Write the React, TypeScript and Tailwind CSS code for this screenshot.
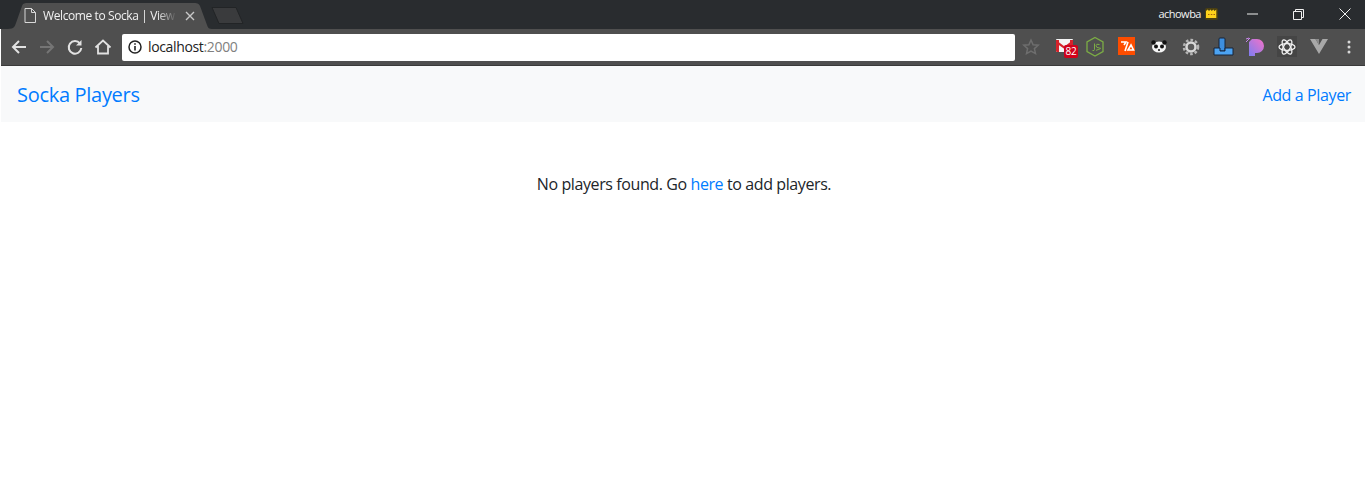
import React from "react";

const ui = { fontFamily: '"Open Sans", "Noto Sans", sans-serif' };

function Ext({ children, w = 24 }: { children: React.ReactNode; w?: number }) {
  return <svg width={w} height="22" viewBox="0 0 24 22" className="shrink-0">{children}</svg>;
}

export default function App() {
  return (
    <div className="w-[1365px] h-[492px] bg-white overflow-hidden flex flex-col font-['Segoe_UI','Open_Sans',sans-serif]">
      {/* title bar */}
      <div className="h-[29px] bg-[#292c2f] flex items-end pl-[8px] relative shrink-0">
        <div className="relative w-[204px] h-[27px] shrink-0">
          <svg width="204" height="27" viewBox="0 0 204 27" className="absolute inset-0">
            <path d="M0 27 C6 27 7 24 8 21 L14 4 C15 1 17 1 20 1 L186 1 C190 1 191 2 192 4 L199 23 C200 26 201 27 204 27 Z" fill="#4f4f4f" />
          </svg>
          <div className="relative flex items-center h-full pl-[16px]">
            <svg width="12" height="15" viewBox="0 0 12 15" className="shrink-0">
              <path d="M1 .5h6.500l4 4v10H1z M7.500 .5v4h4" fill="none" stroke="#d8d8d8" strokeWidth="1" />
            </svg>
            <span className="ml-[7px] w-[134px] whitespace-nowrap text-[12px] text-[#f1f1f1] tracking-[-0.4px]" style={{ ...ui, maskImage: "linear-gradient(to right, black 85%, transparent)" }}>Welcome to Socka | View</span>
            <svg width="10" height="10" viewBox="0 0 10 10" className="ml-[8px] shrink-0">
              <path d="M1 1l8 8M9 1l-8 8" stroke="#c8c8c8" strokeWidth="1.400" />
            </svg>
          </div>
        </div>
        <svg width="34" height="17" viewBox="0 0 34 17" className="mb-[5px] ml-[-1px] shrink-0">
          <path d="M1 .5h24l7 16H8z" fill="#3a3b3d" stroke="#222426" />
        </svg>
        <div className="ml-auto flex items-center h-full self-start pb-[1px] text-[#f4f4f4]">
          <span className="text-[11px] tracking-[-0.5px] mr-[4px]" style={ui}>achowba</span>
          <svg width="13" height="12" viewBox="0 0 13 12" className="mr-[29px]">
            <rect x="0" y="0" width="13" height="12" rx="2" fill="#4a3f12" />
            <path d="M1 3l1.700-1.500 1.300 1.500 1.500-1.500 1.300 1.500 1.500-1.500 1.300 1.500 1.700-1.500V10H1z" fill="#ffd21a" />
            <path d="M3 6.500h1.500M5.800 6.500h1.500M8.500 6.500H10" stroke="#a8620f" />
          </svg>
          <svg width="11" height="2" viewBox="0 0 11 2" className="mr-[35px]"><path d="M0 1h11" stroke="#f0f0f0" /></svg>
          <svg width="11" height="11" viewBox="0 0 11 11" className="mr-[35px]">
            <path d="M.5 2.500h8v8h-8zM2.500 2.500v-2h8v8h-2" fill="none" stroke="#f0f0f0" />
          </svg>
          <svg width="12" height="12" viewBox="0 0 12 12" className="mr-[14px]"><path d="M.5 .5l11 11M11.500 .5l-11 11" stroke="#f0f0f0" /></svg>
        </div>
      </div>

      {/* toolbar */}
      <div className="h-[37px] ml-[1px] bg-[#4f4f4f] border-b border-[#3a3a3a] flex items-center shrink-0">
        <svg width="18" height="18" viewBox="0 0 18 18" className="ml-[9px]"><path d="M16 9H3M9 3L3 9l6 6" fill="none" stroke="#e2e2e2" strokeWidth="2" /></svg>
        <svg width="18" height="18" viewBox="0 0 18 18" className="ml-[10px]"><path d="M2 9h13M9 3l6 6-6 6" fill="none" stroke="#757575" strokeWidth="2" /></svg>
        <svg width="18" height="18" viewBox="0 0 18 18" className="ml-[10px]"><path d="M14 5.500A6.300 6.300 0 1 0 15.300 10" fill="none" stroke="#e2e2e2" strokeWidth="2" /><path d="M15.500 2v5.500H10z" fill="#e2e2e2" /></svg>
        <svg width="18" height="18" viewBox="0 0 18 18" className="ml-[10px]"><path d="M1.500 9.500L9 2.500l7.500 7M4 8v7.500h10V8" fill="none" stroke="#e2e2e2" strokeWidth="1.800" /></svg>
        <div className="ml-[10px] w-[893px] h-[27px] bg-white rounded-[2px] flex items-center pl-[6px] pb-[1px] text-[14px] tracking-[-0.35px]" style={ui}>
          <svg width="14" height="14" viewBox="0 0 14 14" className="shrink-0 mt-[1px]">
            <circle cx="7" cy="7" r="6" fill="none" stroke="#222" strokeWidth="1.500" />
            <path d="M7 6v4.500M7 3.300v1.500" stroke="#222" strokeWidth="1.600" />
          </svg>
          <span className="ml-[6px] text-[#222]">localhost<span className="text-[#808080]">:2000</span></span>
        </div>
        <svg width="18" height="18" viewBox="0 0 18 18" className="ml-[7px] shrink-0"><path d="M9 2l2.100 4.700 5.100.5-3.800 3.400 1.100 5L9 13l-4.500 2.600 1.100-5L1.800 7.200l5.100-.5z" fill="none" stroke="#6e6e6e" strokeWidth="1.500" /></svg>
        <div className="ml-[16px] w-[24px] h-[22px] relative shrink-0">
          <svg width="18" height="13" viewBox="0 0 18 13" className="absolute left-0 top-[3px]">
            <rect width="17" height="13" rx="1" fill="#f4f4f4" />
            <path d="M0 1h3v12H1a1 1 0 0 1-1-1zM14 1h3v11a1 1 0 0 1-1 1h-2zM0 1l8.500 6.500L17 1v3L8.500 10 0 4z" fill="#d5232b" />
          </svg>
          <span className="absolute left-[8px] top-[9px] w-[14px] h-[13px] rounded-[2px] bg-[#d0021b] text-white text-[10px] leading-[13px] text-center tracking-[-0.3px]" style={ui}>82</span>
        </div>
        <div className="ml-[3px] flex items-center gap-[8px]">
          <Ext><path d="M12 1.500l8 4.500v9.500l-8 4.500-8-4.500V6z" fill="none" stroke="#7cad45" strokeWidth="1.300" /><path d="M11.500 7.500v6q0 1.500-2 1M16.500 8.500q-3.500-1-3.500 1.200t3.500 2.300-3.500 2.300" fill="none" stroke="#7cad45" /></Ext>
          <Ext><rect x="3" y="1" width="17" height="18" fill="#fd4d00" /><path d="M6 6h5l-2 3M13 6l-3 9M13 14l3-5 2.500 5z" fill="none" stroke="#fff" strokeWidth="1.600" /></Ext>
          <Ext><ellipse cx="12" cy="11" rx="7" ry="5.500" fill="#f4f4f4" /><circle cx="6.500" cy="6.500" r="2.200" fill="#111" /><circle cx="17.500" cy="6.500" r="2.200" fill="#111" /><circle cx="9" cy="10.500" r="2" fill="#111" /><circle cx="15" cy="10.500" r="2" fill="#111" /><path d="M11 14h2" stroke="#111" strokeWidth="1.500" /></Ext>
          <Ext><circle cx="12" cy="11" r="4.500" fill="#5a5a5a" stroke="#d8d8d8" strokeWidth="2.500" /><circle cx="12" cy="11" r="7" fill="none" stroke="#b5b5b5" strokeWidth="2.600" strokeDasharray="2.600 2" /></Ext>
          <Ext><rect x="8" y="2" width="6" height="13" rx="1" fill="#3d8fe0" stroke="#16253a" /><path d="M3 12h6v3h5v-3h8v7H3z" fill="#4ca3f2" stroke="#16253a" /></Ext>
          <Ext><defs><linearGradient id="p" x1="0" y1="1" x2="1" y2="0"><stop offset="0" stopColor="#7d7df0" /><stop offset="1" stopColor="#f472c8" /></linearGradient></defs><path d="M6 6l3-3h5a7 7 0 0 1 0 14h-2v3H6z" fill="url(#p)" /><path d="M3 3l3-1M3 6l4-4" stroke="#c886e8" /></Ext>
          <Ext><rect x="2" y="0" width="20" height="21" fill="#454545" /><g fill="none" stroke="#f1f1f1" strokeWidth="1.300"><ellipse cx="12" cy="11" rx="8" ry="3.300" /><ellipse cx="12" cy="11" rx="8" ry="3.300" transform="rotate(60 12 11)" /><ellipse cx="12" cy="11" rx="8" ry="3.300" transform="rotate(120 12 11)" /></g></Ext>
          <Ext><path d="M3 3h5.500l3.500 6 3.500-6H21l-9 15z" fill="#a8a8a8" /><path d="M8.500 3H12v6z" fill="#8c8c8c" /></Ext>
        </div>
        <svg width="4" height="14" viewBox="0 0 4 14" className="ml-[16px] shrink-0"><circle cx="2" cy="2" r="1.500" fill="#d8d8d8" /><circle cx="2" cy="7" r="1.500" fill="#d8d8d8" /><circle cx="2" cy="12" r="1.500" fill="#d8d8d8" /></svg>
      </div>

      {/* navbar */}
      <nav className="ml-[1px] h-[56px] bg-[#f8f9fa] flex items-center justify-between pl-[16px] pr-[14px] pt-[1px] shrink-0" style={ui}>
        <a className="text-[#007bff] text-[20px] tracking-[-0.3px]" href="#">Socka Players</a>
        <a className="text-[#007bff] text-[16px] tracking-[-0.37px]" href="#">Add a Player</a>
      </nav>

      {/* content */}
      <p className="mt-[50px] ml-[3px] text-center text-[16px] leading-[24px] text-[#212529] tracking-[-0.4px]" style={ui}>
        No players found. Go <a className="text-[#007bff]" href="#">here</a> to add players.
      </p>
    </div>
  );
}
